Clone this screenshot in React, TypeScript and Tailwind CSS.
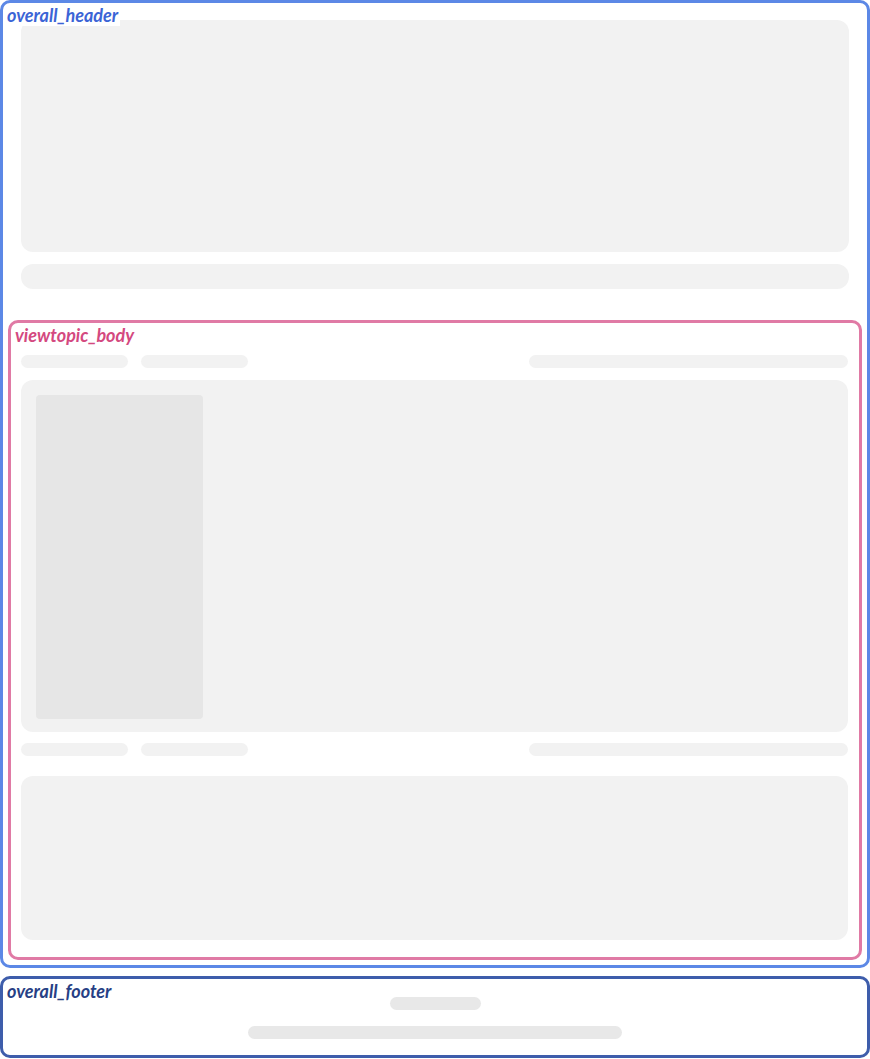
import React from "react";

function Pill({ className }: { className: string }) {
  return <div className={"rounded-full " + className} />;
}

function PillRow() {
  return (
    <div className="flex items-center h-[13px]">
      <Pill className="w-[107px] h-[13px] bg-[#f2f2f2]" />
      <Pill className="ml-[13px] w-[107px] h-[13px] bg-[#f2f2f2]" />
      <Pill className="ml-auto w-[319px] h-[13px] bg-[#f2f2f2]" />
    </div>
  );
}

export default function App() {
  return (
    <div className="w-[870px] bg-white font-['Lato','Noto_Sans',sans-serif]">
      <div className="relative border-[3px] border-[#5c88e6] rounded-[10px] pt-[17px] pb-[5px] px-[5px]">
        <span className="absolute left-[4px] top-[1px] bg-white pr-[2px] text-[18px] leading-[22px] font-bold italic text-[#3b64d6]">
          overall_header
        </span>
        <div className="mx-[13px] h-[232px] rounded-[12px] bg-[#f2f2f2]" />
        <div className="mx-[13px] mt-[12px] h-[25px] rounded-[12px] bg-[#f2f2f2]" />
        <div className="relative mt-[31px] border-[3px] border-[#e07aa5] rounded-[10px] pt-[32px] pb-[17px] pl-[10px] pr-[11px]">
          <span className="absolute left-[4px] top-[1px] bg-white pr-[2px] text-[18px] leading-[22px] font-bold italic text-[#d4497f]">
            viewtopic_body
          </span>
          <PillRow />
          <div className="mt-[12px] h-[352px] rounded-[12px] bg-[#f2f2f2] pt-[15px] pl-[15px]">
            <div className="w-[167px] h-[324px] rounded-[4px] bg-[#e6e6e6]" />
          </div>
          <div className="mt-[11px]">
            <PillRow />
          </div>
          <div className="mt-[20px] h-[164px] rounded-[12px] bg-[#f2f2f2]" />
        </div>
      </div>
      <div className="relative mt-[8px] border-[3px] border-[#3e5dab] rounded-[10px] pt-[18px] pb-[16px] flex flex-col items-center">
        <span className="absolute left-[4px] top-[1px] bg-white pr-[2px] text-[18px] leading-[22px] font-bold italic text-[#273f85]">
          overall_footer
        </span>
        <Pill className="w-[91px] h-[13px] bg-[#e8e8e8]" />
        <Pill className="mt-[16px] w-[374px] h-[13px] bg-[#e8e8e8]" />
      </div>
    </div>
  );
}
